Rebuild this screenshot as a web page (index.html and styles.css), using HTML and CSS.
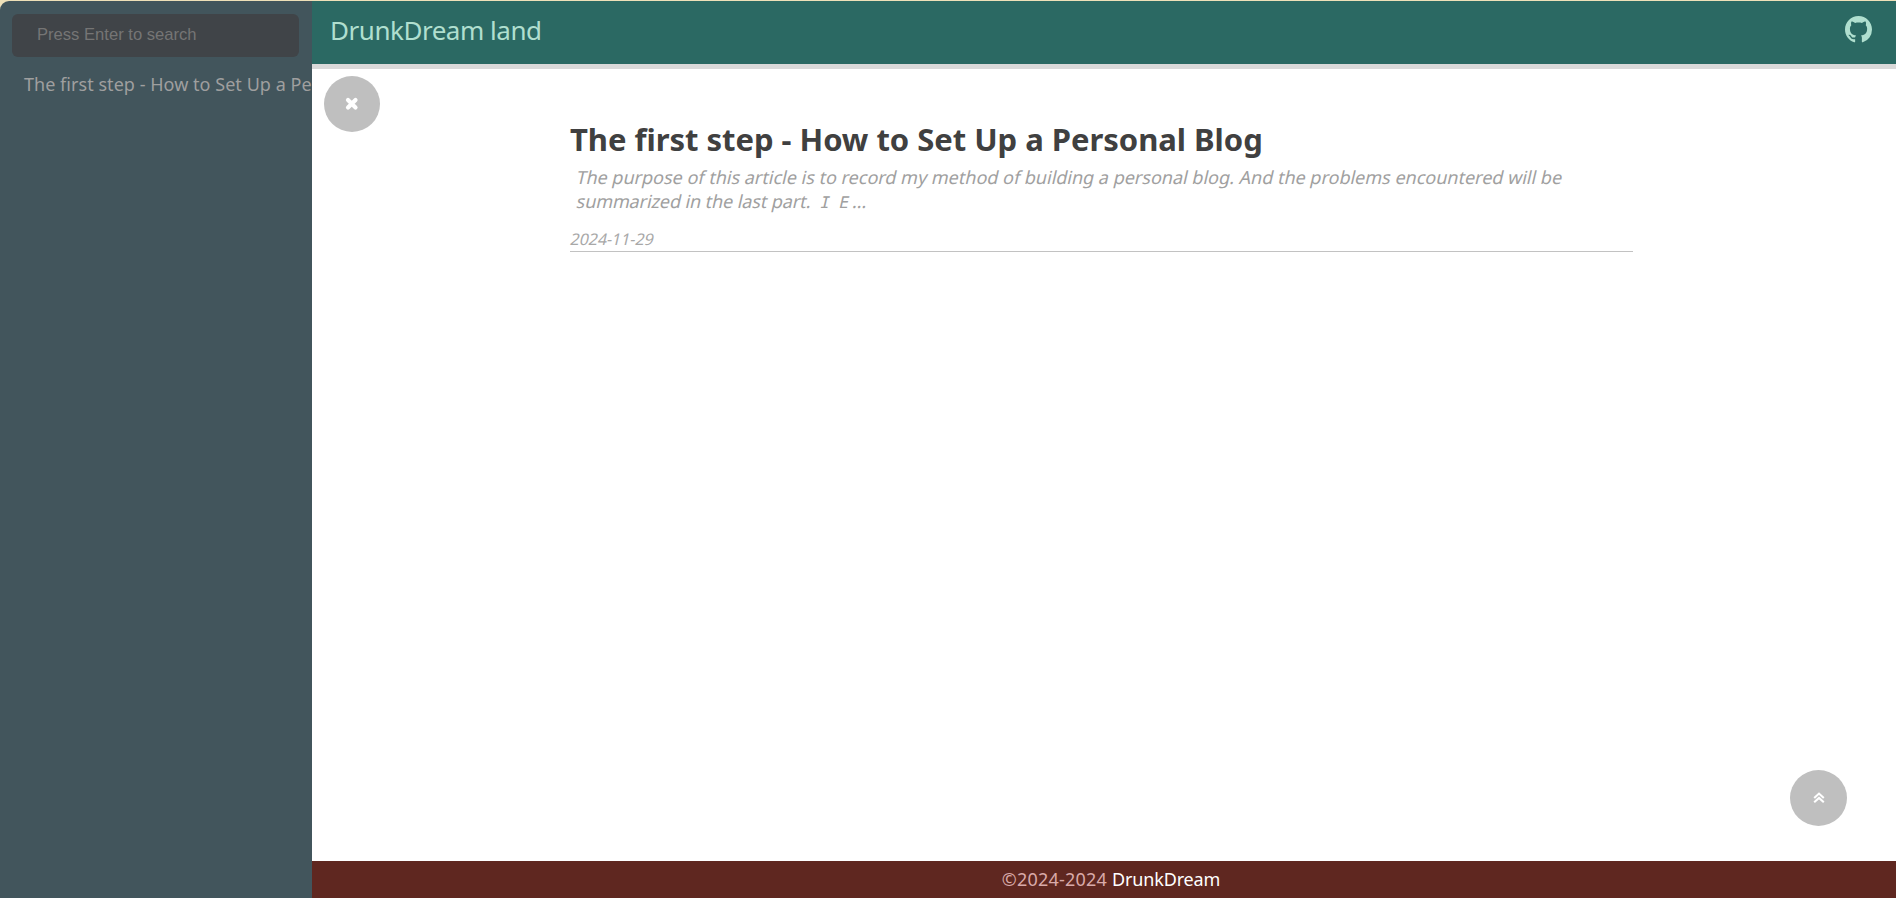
FILE: index.html
```html
<!DOCTYPE html>
<html lang="en">
<head>
<meta charset="utf-8">
<title>DrunkDream land</title>
<link rel="stylesheet" href="styles.css">
</head>
<body>
<div class="app">
  <aside class="sidebar">
    <input class="search" type="text" placeholder="Press Enter to search">
    <a class="side-link">The first step - How to Set Up a Personal Blog</a>
  </aside>
  <div class="page">
    <header class="topbar">
      <span class="brand">DrunkDream land</span>
      <svg class="github" viewBox="0 0 16 16"><path d="M8 0C3.58 0 0 3.58 0 8c0 3.54 2.29 6.53 5.47 7.59.4.07.55-.17.55-.38 0-.19-.01-.82-.01-1.49-2.01.37-2.53-.49-2.69-.94-.09-.23-.48-.94-.82-1.13-.28-.15-.68-.52-.01-.53.63-.01 1.08.58 1.23.82.72 1.21 1.87.87 2.33.66.07-.52.28-.87.51-1.07-1.78-.2-3.64-.89-3.64-3.95 0-.87.31-1.59.82-2.15-.08-.2-.36-1.02.08-2.12 0 0 .67-.21 2.2.82.64-.18 1.32-.27 2-.27s1.36.09 2 .27c1.53-1.04 2.2-.82 2.2-.82.44 1.1.16 1.92.08 2.12.51.56.82 1.27.82 2.15 0 3.07-1.87 3.75-3.65 3.95.29.25.54.73.54 1.48 0 1.07-.01 1.93-.01 2.2 0 .21.15.46.55.38A8.01 8.01 0 0 0 16 8c0-4.42-3.58-8-8-8z"/></svg>
    </header>
    <main class="content">
      <article class="post">
        <h1 class="post-title">The first step - How to Set Up a Personal Blog</h1>
        <p class="summary"><span class="line">The purpose of this article is to record my method of building a personal blog. And the problems encountered will be</span><span class="line last">summarized in the last part.<span class="wide">I E</span><span class="dots">...</span></span></p>
        <time class="date">2024-11-29</time>
      </article>
      <button class="round close"><svg width="14" height="14" viewBox="0 0 14 14"><path d="M3 3L10.5 10.5M10.5 3L3 10.5" stroke="#fff" stroke-width="4.2" stroke-linecap="round"/></svg></button>
      <button class="round totop"><svg width="12" height="12" viewBox="0 0 12 12"><path d="M1.2 6L6 1.6L10.8 6M1.2 10.3L6 5.9L10.8 10.3" fill="none" stroke="#fff" stroke-width="2.1"/></svg></button>
    </main>
    <footer class="footer"><span class="copy">©2024-2024</span><span class="owner">DrunkDream</span></footer>
  </div>
</div>
</body>
</html>
```
FILE: styles.css
```css
* { box-sizing: border-box; }
body { margin: 0; background: #eee0b8; font-family: "Noto Sans", "Open Sans", sans-serif; overflow: hidden; }
.app { display: flex; height: 898px; padding-top: 1px; }
.sidebar { width: 312px; flex: none; padding: 13px 0 0 12px; background: #42555c; border-top-left-radius: 9px; overflow: hidden; }
.search { display: block; width: 287px; height: 43px; padding: 0 25px 1px; border: 0; border-radius: 6px; background: #404448; color: #aaa; font: 16.6px "Liberation Sans", Arial, sans-serif; }
.search::placeholder { color: #757575; opacity: 1; }
.side-link { display: block; margin: 15px 0 0 12px; color: #9f9f9f; font-size: 18px; letter-spacing: 0.04px; line-height: 24px; white-space: nowrap; }
.page { flex: 1; min-width: 0; display: flex; flex-direction: column; background: #fff; }
.topbar { height: 68px; flex: none; display: flex; justify-content: space-between; align-items: flex-start; padding: 10px 24px 0 18px; background: #2b6963; border-bottom: 5px solid #d9d9d9; }
.brand { color: #b0dfcf; font-size: 26px; letter-spacing: -0.47px; line-height: 38px; white-space: nowrap; }
.github { width: 27px; height: 27px; margin-top: 5px; fill: #b0dfcf; }
.content { flex: 1; position: relative; padding: 48px 263px 0 258px; }
.post { height: 135px; border-bottom: 1px solid #c2c2c2; }
.post-title { margin: 0; color: #404040; font-size: 31px; letter-spacing: -0.03px; line-height: 44px; white-space: nowrap; }
.summary { margin: 4px 0 0 7px; color: #a0a0a0; font-size: 18px; line-height: 24px; white-space: nowrap; }
.line { display: block; transform: skewX(-13deg); }
.last { letter-spacing: -0.1px; }
.wide { margin-left: 9px; font-family: "DejaVu Sans Mono", monospace; font-size: 16px; }
.dots { margin-left: 4px; }
.date { display: block; margin: 14px 0 0 1px; color: #a8a8a8; font-size: 16px; letter-spacing: -0.05px; line-height: 20px; transform: skewX(-13deg); }
.round { position: absolute; display: flex; align-items: center; justify-content: center; width: 56px; height: 56px; padding: 0; border: 0; border-radius: 50%; background: #bfbfbf; }
.close { left: 12px; top: 7px; }
.totop { right: 49px; bottom: 35px; width: 57px; }
.footer { height: 37px; flex: none; display: flex; justify-content: center; gap: 5px; padding-left: 54px; padding-right: 40px; background: #5f2720; font-size: 18px; line-height: 36px; }
.copy { color: #d9aaa9; letter-spacing: 0.2px; }
.owner { color: #fff; letter-spacing: -0.15px; }
```
